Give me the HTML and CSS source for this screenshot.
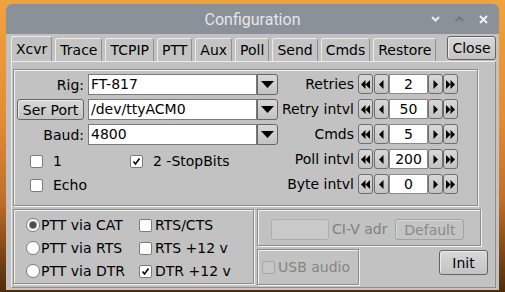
FILE: index.html
```html
<!DOCTYPE html>
<html lang="en">
<head>
    <meta charset="UTF-8">
    <title>Configuration</title>
    <link rel="stylesheet" href="styles.css">
</head>
<body>
<div class="desk">
    <div class="window">
        <div class="titlebar">
            <span class="title">Configuration</span>
            <div class="wm-buttons">
                <svg width="9" height="6" viewBox="0 0 9 6"><polyline points="1,1 4.5,4.5 8,1" fill="none" stroke="#ececec" stroke-width="2"/></svg>
                <svg width="9" height="6" viewBox="0 0 9 6"><polyline points="1,5 4.5,1.5 8,5" fill="none" stroke="#6f777e" stroke-width="2"/></svg>
                <svg width="9" height="9" viewBox="0 0 9 9"><path d="M1 1 L8 8 M8 1 L1 8" stroke="#f2f2f2" stroke-width="2"/></svg>
            </div>
        </div>

        <div class="client">
            <!-- tabs -->
            <div class="tabbar">
                <div class="tab active">Xcvr</div>
                <div class="tab">Trace</div>
                <div class="tab">TCPIP</div>
                <div class="tab">PTT</div>
                <div class="tab">Aux</div>
                <div class="tab">Poll</div>
                <div class="tab">Send</div>
                <div class="tab">Cmds</div>
                <div class="tab">Restore</div>
                <button class="btn close-btn">Close</button>
            </div>

            <div class="tab-panel">
                <!-- serial settings -->
                <div class="frame upper">
                    <div class="left-col">
                        <div class="field-row">
                            <span class="field-label">Rig:</span>
                            <div class="combo">
                                <div class="combo-input">FT-817</div>
                                <div class="combo-btn"><svg width="13" height="7" viewBox="0 0 13 7"><polygon points="0,0 13,0 6.5,7" fill="#000"/></svg></div>
                            </div>
                        </div>
                        <div class="field-row">
                            <button class="btn port-btn">Ser Port</button>
                            <div class="combo">
                                <div class="combo-input">/dev/ttyACM0</div>
                                <div class="combo-btn"><svg width="13" height="7" viewBox="0 0 13 7"><polygon points="0,0 13,0 6.5,7" fill="#000"/></svg></div>
                            </div>
                        </div>
                        <div class="field-row">
                            <span class="field-label">Baud:</span>
                            <div class="combo">
                                <div class="combo-input">4800</div>
                                <div class="combo-btn"><svg width="13" height="7" viewBox="0 0 13 7"><polygon points="0,0 13,0 6.5,7" fill="#000"/></svg></div>
                            </div>
                        </div>
                        <div class="check-row first">
                            <span class="check wide"><span class="box"></span>1</span>
                            <span class="check"><span class="box"><svg width="9" height="9" viewBox="0 0 9 9"><polyline points="1.5,4.5 3.5,7 7.5,1.5" fill="none" stroke="#000" stroke-width="1.6"/></svg></span>2 -StopBits</span>
                        </div>
                        <div class="check-row">
                            <span class="check"><span class="box"></span>Echo</span>
                        </div>
                    </div>

                    <div class="right-col">
                        <span class="spin-label">Retries</span>
                        <div class="counter">
                            <span class="cbtn first"><svg width="9" height="9" viewBox="0 0 9 9"><polygon points="4.5,0 4.5,9 0,4.5"/><polygon points="9,0 9,9 4.5,4.5"/></svg></span>
                            <span class="cbtn"><svg width="5" height="9" viewBox="0 0 5 9"><polygon points="4.5,0 4.5,9 0,4.5"/></svg></span>
                            <span class="cval">2</span>
                            <span class="cbtn"><svg width="5" height="9" viewBox="0 0 5 9"><polygon points="0.5,0 0.5,9 5,4.5"/></svg></span>
                            <span class="cbtn"><svg width="9" height="9" viewBox="0 0 9 9"><polygon points="0,0 0,9 4.5,4.5"/><polygon points="4.5,0 4.5,9 9,4.5"/></svg></span>
                        </div>
                        <span class="spin-label">Retry intvl</span>
                        <div class="counter">
                            <span class="cbtn first"><svg width="9" height="9" viewBox="0 0 9 9"><polygon points="4.5,0 4.5,9 0,4.5"/><polygon points="9,0 9,9 4.5,4.5"/></svg></span>
                            <span class="cbtn"><svg width="5" height="9" viewBox="0 0 5 9"><polygon points="4.5,0 4.5,9 0,4.5"/></svg></span>
                            <span class="cval">50</span>
                            <span class="cbtn"><svg width="5" height="9" viewBox="0 0 5 9"><polygon points="0.5,0 0.5,9 5,4.5"/></svg></span>
                            <span class="cbtn"><svg width="9" height="9" viewBox="0 0 9 9"><polygon points="0,0 0,9 4.5,4.5"/><polygon points="4.5,0 4.5,9 9,4.5"/></svg></span>
                        </div>
                        <span class="spin-label">Cmds</span>
                        <div class="counter">
                            <span class="cbtn first"><svg width="9" height="9" viewBox="0 0 9 9"><polygon points="4.5,0 4.5,9 0,4.5"/><polygon points="9,0 9,9 4.5,4.5"/></svg></span>
                            <span class="cbtn"><svg width="5" height="9" viewBox="0 0 5 9"><polygon points="4.5,0 4.5,9 0,4.5"/></svg></span>
                            <span class="cval">5</span>
                            <span class="cbtn"><svg width="5" height="9" viewBox="0 0 5 9"><polygon points="0.5,0 0.5,9 5,4.5"/></svg></span>
                            <span class="cbtn"><svg width="9" height="9" viewBox="0 0 9 9"><polygon points="0,0 0,9 4.5,4.5"/><polygon points="4.5,0 4.5,9 9,4.5"/></svg></span>
                        </div>
                        <span class="spin-label">Poll intvl</span>
                        <div class="counter">
                            <span class="cbtn first"><svg width="9" height="9" viewBox="0 0 9 9"><polygon points="4.5,0 4.5,9 0,4.5"/><polygon points="9,0 9,9 4.5,4.5"/></svg></span>
                            <span class="cbtn"><svg width="5" height="9" viewBox="0 0 5 9"><polygon points="4.5,0 4.5,9 0,4.5"/></svg></span>
                            <span class="cval">200</span>
                            <span class="cbtn"><svg width="5" height="9" viewBox="0 0 5 9"><polygon points="0.5,0 0.5,9 5,4.5"/></svg></span>
                            <span class="cbtn"><svg width="9" height="9" viewBox="0 0 9 9"><polygon points="0,0 0,9 4.5,4.5"/><polygon points="4.5,0 4.5,9 9,4.5"/></svg></span>
                        </div>
                        <span class="spin-label">Byte intvl</span>
                        <div class="counter">
                            <span class="cbtn first"><svg width="9" height="9" viewBox="0 0 9 9"><polygon points="4.5,0 4.5,9 0,4.5"/><polygon points="9,0 9,9 4.5,4.5"/></svg></span>
                            <span class="cbtn"><svg width="5" height="9" viewBox="0 0 5 9"><polygon points="4.5,0 4.5,9 0,4.5"/></svg></span>
                            <span class="cval">0</span>
                            <span class="cbtn"><svg width="5" height="9" viewBox="0 0 5 9"><polygon points="0.5,0 0.5,9 5,4.5"/></svg></span>
                            <span class="cbtn"><svg width="9" height="9" viewBox="0 0 9 9"><polygon points="0,0 0,9 4.5,4.5"/><polygon points="4.5,0 4.5,9 9,4.5"/></svg></span>
                        </div>
                    </div>
                </div>

                <div class="lower">
                    <!-- PTT options -->
                    <div class="frame ptt">
                        <span class="radio"><span class="dot on"></span>PTT via CAT</span>
                        <span class="check tight"><span class="box"></span>RTS/CTS</span>
                        <span class="radio"><span class="dot"></span>PTT via RTS</span>
                        <span class="check tight"><span class="box"></span>RTS +12 v</span>
                        <span class="radio"><span class="dot"></span>PTT via DTR</span>
                        <span class="check tight"><span class="box"><svg width="9" height="9" viewBox="0 0 9 9"><polyline points="1.5,4.5 3.5,7 7.5,1.5" fill="none" stroke="#000" stroke-width="1.6"/></svg></span>DTR +12 v</span>
                    </div>

                    <div class="lower-right">
                        <div class="frame civ">
                            <div class="civ-input"></div>
                            <span class="civ-label">CI-V adr</span>
                            <button class="btn default-btn" disabled>Default</button>
                        </div>
                        <div class="bottom-row">
                            <div class="frame usb">
                                <span class="check tight disabled"><span class="box"></span>USB audio</span>
                            </div>
                            <button class="btn init-btn">Init</button>
                        </div>
                    </div>
                </div>
            </div>
        </div>
    </div>
</div>
</body>
</html>
```

FILE: styles.css
```css
* {
    box-sizing: border-box;
}
html, body {
    margin: 0;
}
body {
    width: 505px;
    height: 292px;
    overflow: hidden;
    background: linear-gradient(180deg, #f0a23c 0%, #e58d33 40%, #c0702a 68%, #7a4414 88%, #4e2c0c 100%);
    font-family: "DejaVu Sans", sans-serif;
    font-size: 14px;
    color: #000;
}
.desk {
    padding: 4px 6px 0;
}
.window {
    width: 493px;
    height: 286px;
    border-radius: 6px 6px 0 0;
    overflow: hidden;
    background: #c2c2c2;
    display: flex;
    flex-direction: column;
}

/* title bar */
.titlebar {
    height: 30px;
    flex: none;
    background: #8a9199;
    display: grid;
    grid-template-columns: 1fr auto 1fr;
    align-items: center;
}
.title {
    grid-column: 2;
    font-family: Roboto, sans-serif;
    font-size: 16px;
    color: #e6e6e6;
}
.wm-buttons {
    grid-column: 3;
    justify-self: end;
    display: flex;
    align-items: center;
    gap: 15px;
    padding-right: 11px;
}
.wm-buttons svg {
    display: block;
}

.client {
    flex: 1;
    display: flex;
    flex-direction: column;
    padding: 2px 3px 2px 5px;
}

/* buttons */
.btn {
    font-family: "DejaVu Sans", sans-serif;
    font-size: 14px;
    color: #000;
    padding: 0;
    border: 1px solid #646464;
    border-radius: 3px;
    background: linear-gradient(#d8d8d8, #c3c3c3);
    box-shadow: inset 1px 1px 0 #ececec;
}
.btn:disabled {
    color: #8a8a8a;
    border-color: #a2a2a2;
    background: #c4c4c4;
    box-shadow: inset 1px 1px 0 #d8d8d8;
}

/* tabs */
.tabbar {
    height: 25px;
    flex: none;
    display: flex;
    align-items: flex-end;
}
.tab {
    height: 23px;
    padding: 0 4px;
    margin-right: 3px;
    display: flex;
    align-items: center;
    border: 1px solid #8e8e8e;
    border-bottom: none;
    border-left-color: #ececec;
    border-top-color: #ececec;
    border-radius: 3px 3px 0 0;
    background: #c4c4c4;
}
.tab.active {
    height: 25px;
    background: #c2c2c2;
}
.close-btn {
    margin-left: auto;
    align-self: flex-start;
    width: 49px;
    height: 24px;
}

.tab-panel {
    flex: 1;
    border: 1px solid #8e8e8e;
    border-top-color: #ececec;
    border-left-color: #ececec;
    padding: 7px 0 0 1px;
}

/* engraved frames */
.frame {
    border: 1px solid #8c8c8c;
    box-shadow: inset 1px 1px 0 #f2f2f2, 1px 1px 0 #f2f2f2;
}

.upper {
    width: 465px;
    height: 137px;
    padding: 4px 19px 0 3px;
    display: flex;
    justify-content: space-between;
}
.left-col {
    width: 261px;
    display: flex;
    flex-direction: column;
}
.field-row {
    height: 21px;
    display: flex;
    align-items: center;
    gap: 4px;
}
.field-row + .field-row {
    margin-top: 4px;
}
.field-label {
    width: 67px;
    text-align: right;
}
.port-btn {
    width: 67px;
    height: 21px;
}
.combo {
    display: flex;
    width: 190px;
    height: 21px;
}
.combo-input {
    width: 169px;
    background: #fff;
    border: 1px solid #7a7a7a;
    padding-left: 2px;
    line-height: 19px;
}
.combo-btn {
    width: 21px;
    border: 1px solid #666;
    border-radius: 0 3px 3px 0;
    background: linear-gradient(#d8d8d8, #c3c3c3);
    display: flex;
    align-items: center;
    justify-content: center;
}

.check-row {
    height: 20px;
    display: flex;
    align-items: center;
    padding-left: 13px;
    margin-top: 4px;
}
.check-row.first {
    margin-top: 6px;
}
.check {
    display: inline-flex;
    align-items: center;
    gap: 10px;
}
.check.wide {
    width: 100px;
}
.check.tight {
    gap: 3px;
}
.box {
    width: 13px;
    height: 13px;
    background: #fff;
    border: 1px solid #7c7c7c;
    border-radius: 2px;
    display: flex;
    align-items: center;
    justify-content: center;
}
.check.disabled {
    color: #858585;
}
.check.disabled .box {
    background: #c6c6c6;
    border-color: #a6a6a6;
}

/* counters */
.right-col {
    display: grid;
    grid-template-columns: auto auto;
    grid-auto-rows: 20px;
    column-gap: 4px;
    row-gap: 5px;
    align-items: center;
}
.spin-label {
    justify-self: end;
}
.counter {
    display: flex;
    height: 20px;
}
.cbtn {
    width: 15px;
    border: 1px solid #6e6e6e;
    border-radius: 3px;
    background: linear-gradient(#d8d8d8, #c3c3c3);
    display: flex;
    align-items: center;
    justify-content: center;
}
.cbtn.first {
    margin-right: 1px;
}
.cval {
    width: 39px;
    background: #fff;
    border: 1px solid #8a8a8a;
    text-align: center;
    line-height: 18px;
}

/* lower groups */
.lower {
    display: flex;
    gap: 3px;
    margin-top: 3px;
}
.ptt {
    width: 241px;
    height: 75px;
    padding: 5px 0 0 12px;
    display: grid;
    grid-template-columns: 113px auto;
    grid-auto-rows: 20px;
    row-gap: 3px;
    align-items: center;
}
.radio {
    display: inline-flex;
    align-items: center;
    gap: 1px;
}
.dot {
    width: 14px;
    height: 14px;
    border: 1px solid #7a7a7a;
    border-radius: 50%;
    background: #fff;
    display: flex;
    align-items: center;
    justify-content: center;
}
.dot.on::after {
    content: "";
    width: 6px;
    height: 6px;
    border-radius: 50%;
    background: #4a4a4a;
    box-shadow: 0 0 0 1px #8a8a8a;
}

.lower-right {
    width: 231px;
    display: flex;
    flex-direction: column;
    gap: 3px;
}
.civ {
    width: 224px;
    height: 37px;
    padding: 9px 0 0 13px;
    display: flex;
    align-items: flex-start;
}
.civ-input {
    width: 58px;
    height: 21px;
    border: 1px solid #adadad;
    border-radius: 3px;
    background: #c9c9c9;
}
.civ-label {
    margin-left: 3px;
    line-height: 21px;
    color: #808080;
}
.default-btn {
    margin-left: 8px;
    width: 69px;
    height: 21px;
}
.bottom-row {
    display: flex;
    align-items: flex-start;
}
.usb {
    width: 102px;
    height: 36px;
    padding-left: 4px;
    display: flex;
    align-items: center;
}
.init-btn {
    margin-left: auto;
    margin-top: 1px;
    width: 49px;
    height: 25px;
}
```
